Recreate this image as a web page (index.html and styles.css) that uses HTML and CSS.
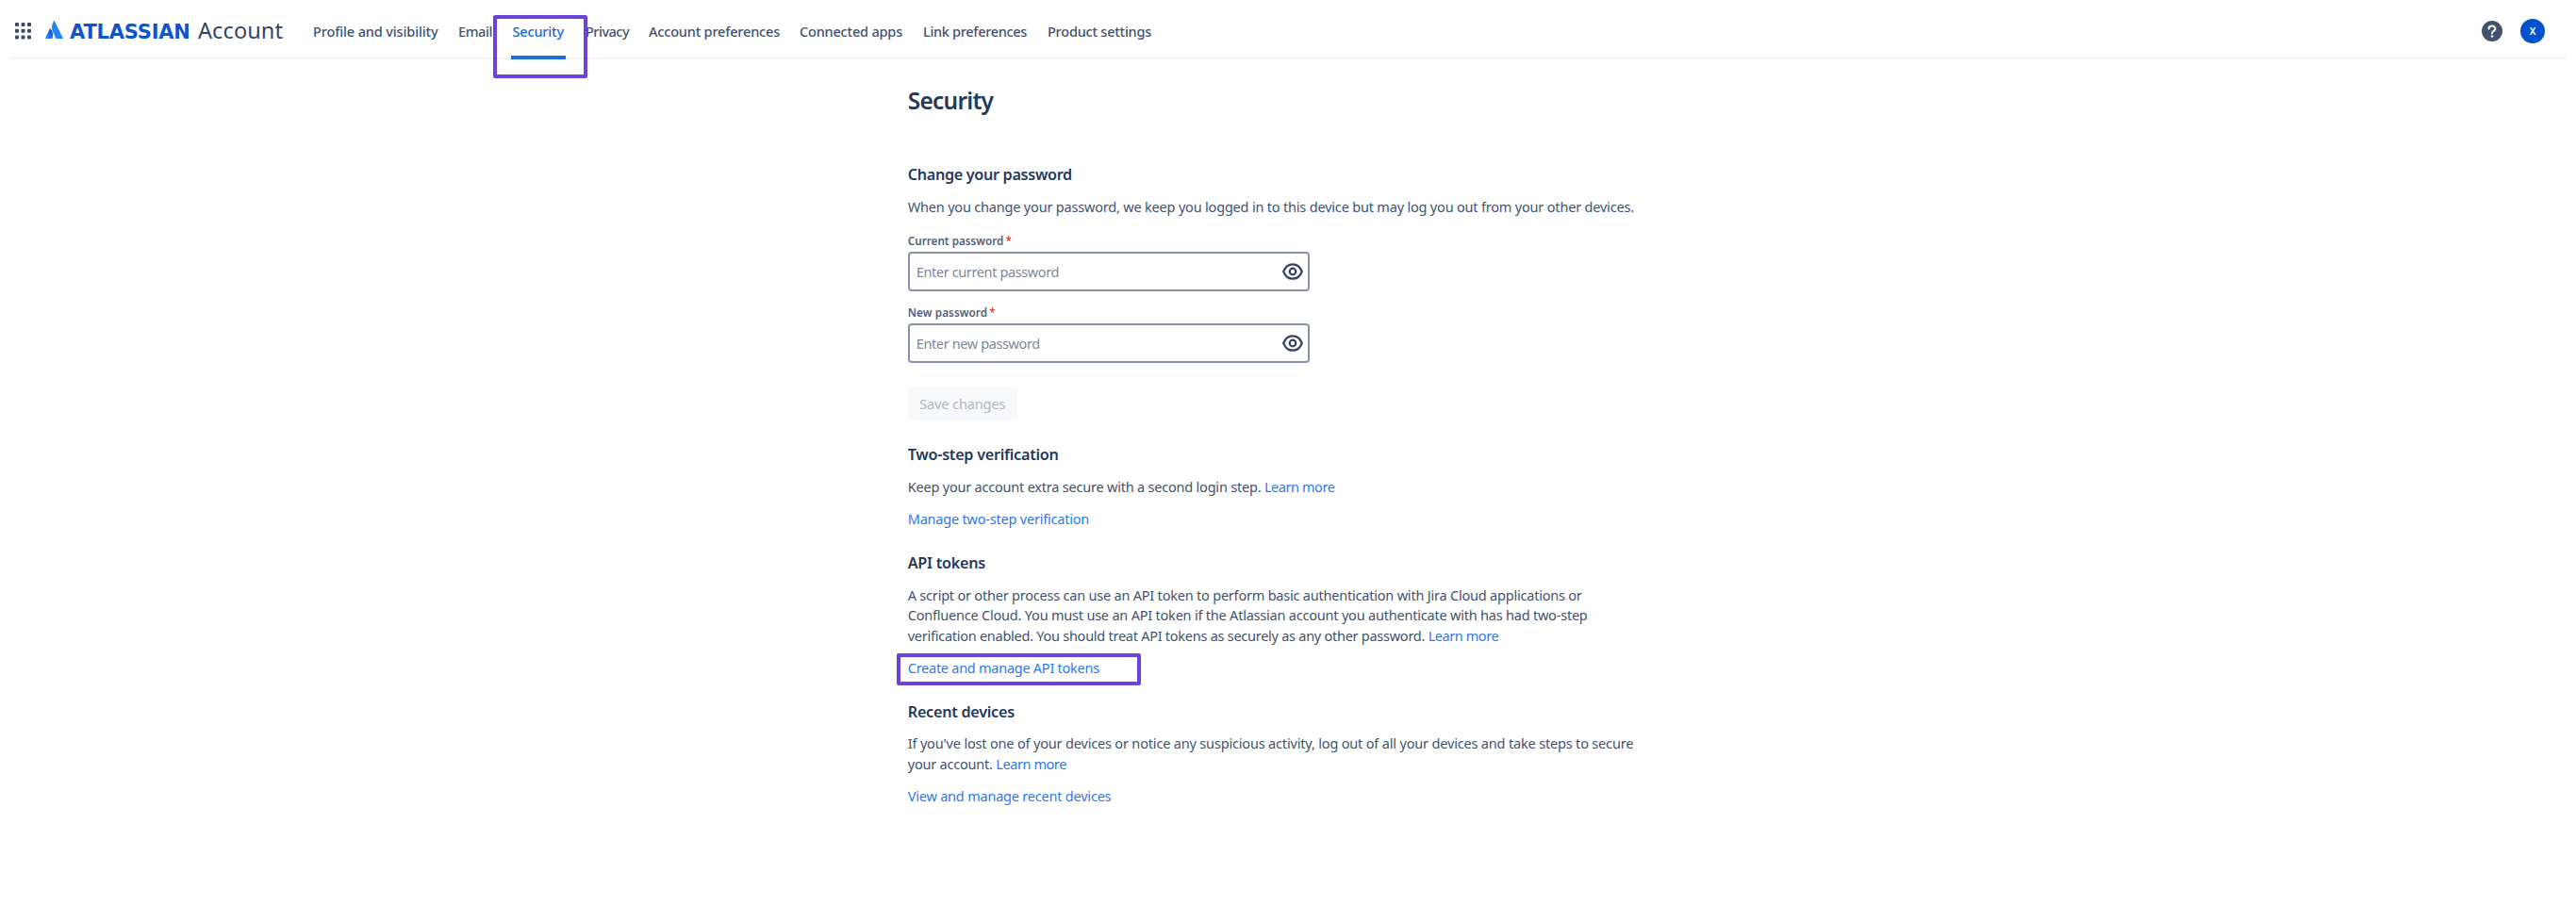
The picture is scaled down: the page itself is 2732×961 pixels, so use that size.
FILE: index.html
```
<!DOCTYPE html>
<html lang="en">
<head>
<meta charset="utf-8">
<title>Security - Atlassian Account</title>
<link rel="stylesheet" href="styles.css">
</head>
<body>
<header class="topbar">
  <svg class="switcher" width="18" height="18" viewBox="0 0 18 18" fill="#3b4c6b">
    <rect x="0" y="0" width="4" height="4" rx="1"/><rect x="6.5" y="0" width="4" height="4" rx="1"/><rect x="13" y="0" width="4" height="4" rx="1"/>
    <rect x="0" y="6.7" width="4" height="4" rx="1"/><rect x="6.5" y="6.7" width="4" height="4" rx="1"/><rect x="13" y="6.7" width="4" height="4" rx="1"/>
    <rect x="0" y="13.4" width="4" height="4" rx="1"/><rect x="6.5" y="13.4" width="4" height="4" rx="1"/><rect x="13" y="13.4" width="4" height="4" rx="1"/>
  </svg>
  <svg class="mark" width="19" height="20" viewBox="0 0 19 20">
    <defs><linearGradient id="fold" x1="0.8" y1="0.1" x2="0.3" y2="0.9"><stop offset="0" stop-color="#0052cc"/><stop offset="1" stop-color="#2684ff"/></linearGradient></defs>
    <path fill="url(#fold)" d="M5.6 8.6c-.3-.3-.7-.3-.9.1L.2 18.2c-.2.4.1.9.5.9h6.200c.3 0 .5-.1.6-.4 1.400-2.900.6-7.200-1.900-10.100z"/>
    <path fill="#2684ff" d="M9 .4C6.400 4.500 6.600 9 8.300 12.400l3 6.300c.1.3.4.4.6.4h6.200c.5 0 .8-.5.6-.9L9.900.4c-.2-.4-.7-.4-.9 0z"/>
  </svg>
  <div class="brand"><span class="brand-name">ATLASSIAN</span><span class="brand-product">Account</span></div>
  <nav class="tabs">
    <a class="tab tab-profile">Profile and visibility</a>
    <a class="tab tab-email">Email</a>
    <a class="tab tab-security">Security</a>
    <a class="tab tab-privacy">Privacy</a>
    <a class="tab tab-account">Account preferences</a>
    <a class="tab tab-apps">Connected apps</a>
    <a class="tab tab-links">Link preferences</a>
    <a class="tab tab-product">Product settings</a>
  </nav>
  <svg class="help" width="22" height="22" viewBox="0 0 22 22">
    <circle cx="11" cy="11" r="11" fill="#42526e"/>
    <path d="M7.600 8.600C7.600 4.400 14.400 4.400 14.400 8.600C14.400 10.900 11 10.800 11 13.200" fill="none" stroke="#fff" stroke-width="2.100" stroke-linecap="round"/>
    <circle cx="11" cy="16.500" r="1.300" fill="#fff"/>
  </svg>
  <div class="avatar">X</div>
</header>

<main class="page">
  <h1 class="title">Security</h1>

  <section class="section section-password">
    <h2 class="heading heading-password">Change your password</h2>
    <p class="text"><span class="intro">When you change your password, we keep you logged in to this device but may log you out from your other devices.</span></p>
    <div class="label">Current password<span class="required">*</span></div>
    <div class="field"><span class="placeholder">Enter current password</span>
      <svg class="eye" width="22" height="18" viewBox="0 0 22 18" fill="none" stroke="#344563" stroke-width="2.200"><path d="M1.200 9C3.100 4 6.700 1.300 11 1.300S18.900 4 20.800 9C18.900 14 15.300 16.700 11 16.700S3.100 14 1.200 9z"/><circle cx="11" cy="9" r="3.300"/></svg>
    </div>
    <div class="label label-new">New password<span class="required">*</span></div>
    <div class="field"><span class="placeholder">Enter new password</span>
      <svg class="eye" width="22" height="18" viewBox="0 0 22 18" fill="none" stroke="#344563" stroke-width="2.200"><path d="M1.200 9C3.100 4 6.700 1.300 11 1.300S18.900 4 20.800 9C18.900 14 15.300 16.700 11 16.700S3.100 14 1.200 9z"/><circle cx="11" cy="9" r="3.300"/></svg>
    </div>
    <button class="save" disabled>Save changes</button>
  </section>

  <section class="section section-twostep">
    <h2 class="heading">Two-step verification</h2>
    <p class="text">Keep your account extra secure with a second login step. <a class="link link-more">Learn more</a></p>
    <p class="text"><a class="link">Manage two-step verification</a></p>
  </section>

  <section class="section">
    <h2 class="heading">API tokens</h2>
    <p class="text">A script or other process can use an API token to perform basic authentication with Jira Cloud applications or<br>Confluence Cloud. You must use an API token if the Atlassian account you authenticate with has had two-step<br><span class="tight">verification enabled. You should treat API tokens as securely as any other password. </span><a class="link link-more">Learn more</a></p>
    <p class="text"><a class="link link-tokens">Create and manage API tokens</a></p>
  </section>

  <section class="section">
    <h2 class="heading">Recent devices</h2>
    <p class="text"><span class="loose">If you've lost one of your devices or notice any suspicious activity, log out of all your devices and take steps to secure</span><br>your account. <a class="link link-more">Learn more</a></p>
    <p class="text"><a class="link">View and manage recent devices</a></p>
  </section>
</main>

<div class="callout callout-tab"></div>
<div class="callout callout-tokens"></div>
</body>
</html>
```

FILE: styles.css
```
* { box-sizing: border-box; }
body {
  position: relative;
  margin: 0;
  height: 961px;
  overflow: hidden;
  background: #fff;
  color: #42526e;
  font: 400 14.5px/21.4px "Noto Sans", "Open Sans", sans-serif;
  white-space: nowrap;
}
h1, h2, p { margin: 0; }

.topbar {
  display: flex;
  align-items: flex-start;
  height: 63px;
  margin: 0 10px;
  padding-left: 6px;
  background: linear-gradient(#eef1f2, #eef1f2) 0 61px / 100% 1.5px no-repeat;
}
.switcher { margin-top: 24px; }
.mark { margin: 22px 0 0 14px; }
.brand {
  display: flex;
  align-items: baseline;
  width: 258px;
  margin: 16px 0 0 7px;
  line-height: 32px;
}
.brand-name { width: 136px; color: #0c55cf; font-family: "DejaVu Sans", sans-serif; font-size: 21px; font-weight: 700; letter-spacing: -0.2px; }
.brand-product { color: #344563; font-size: 23.5px; letter-spacing: 0.1px; }

.tabs { display: flex; height: 63px; font-weight: 500; }
.tab { padding-top: 22.900px; }
.tab-profile { width: 154px; letter-spacing: -0.125px; }
.tab-email { width: 55.5px; letter-spacing: -0.38px; }
.tab-security {
  width: 58.5px;
  margin-right: 21px;
  padding-left: 2px;
  color: #1868db;
  letter-spacing: -0.16px;
  background: linear-gradient(#1d6fe0, #1d6fe0) 0 59px / 100% 4px no-repeat;
}
.tab-privacy { width: 67px; letter-spacing: -0.5px; }
.tab-account { width: 160px; letter-spacing: -0.185px; }
.tab-apps { width: 131px; letter-spacing: -0.19px; }
.tab-links { width: 132px; letter-spacing: -0.31px; }
.tab-product { letter-spacing: -0.22px; }

.help { margin: 21.5px 19px 0 auto; }
.avatar {
  width: 26px;
  height: 26px;
  margin: 19.5px 23px 0 0;
  border-radius: 50%;
  background: #0052cc;
  color: #fff;
  font-size: 10.500px;
  font-weight: 600;
  line-height: 26px;
  text-align: center;
}

.page { width: 806.500px; margin: 29px auto 0; }
.title { color: #253858; font-size: 24.5px; font-weight: 600; line-height: 30px; letter-spacing: -0.77px; }
.section { margin-top: 24.5px; }
.section-password { margin-top: 51.500px; }
.section-twostep { margin-top: 26px; }
.heading { margin-bottom: 12.800px; color: #253858; font-size: 16.2px; font-weight: 600; line-height: 22px; letter-spacing: -0.27px; }
.heading-password { margin-bottom: 13.300px; letter-spacing: -0.32px; }
.text { letter-spacing: -0.21px; }
.text + .text { margin-top: 12.7px; }
.intro { letter-spacing: -0.19px; }
.tight { letter-spacing: -0.26px; }
.loose { letter-spacing: -0.174px; }
.link { color: #2a79ee; }
.link-more { letter-spacing: -0.43px; }
.link-tokens { letter-spacing: -0.26px; }

.label { margin: 16.4px 0 4px; font-size: 11.7px; font-weight: 600; line-height: 16px; color: #52617a; }
.label-new { margin-top: 13.500px; letter-spacing: 0.09px; }
.required { margin-left: 2px; color: #d03a20; font-weight: 500; }
.field {
  display: flex;
  align-items: center;
  justify-content: space-between;
  width: 426px;
  height: 42.500px;
  padding: 0 5px 0 7px;
  border: 2px solid #8993a8;
  border-radius: 4px;
}
.placeholder { padding-top: 2.500px; color: #7c879a; letter-spacing: -0.38px; }
.save {
  display: block;
  width: 116px;
  height: 34.500px;
  margin-top: 25.500px;
  padding: 1.500px 0 0;
  border: 0;
  border-radius: 4px;
  background: #f7f8f9;
  color: #b0b7c3;
  font: inherit;
  letter-spacing: -0.12px;
}

.callout { position: absolute; border: 4px solid #6b43db; border-radius: 2px; }
.callout-tab { left: 523px; top: 16px; width: 100px; height: 67px; }
.callout-tokens { left: 951px; top: 693px; width: 259px; height: 34px; }
```
